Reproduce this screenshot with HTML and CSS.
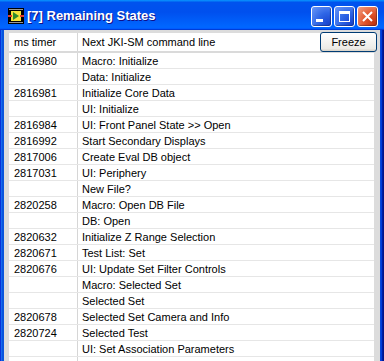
FILE: index.html
```html
<!DOCTYPE html>
<html lang="en">
<head>
  <meta charset="UTF-8">
  <title>[7] Remaining States</title>
  <link rel="stylesheet" href="styles.css">
</head>
<body>
  <div class="window">
    <div class="titlebar">
      <svg class="vi-icon" width="16" height="16" viewBox="0 0 16 16">
        <rect x="0" y="0" width="16" height="16" fill="#000"/>
        <rect x="1" y="1" width="14" height="1" fill="#9a9a9a"/>
        <rect x="1" y="14" width="14" height="1" fill="#9a9a9a"/>
        <rect x="3" y="3" width="10" height="10" fill="#f4e23c"/>
        <path d="M5 4 L11 8 L5 12 Z" fill="#2d8a2d"/>
        <rect x="0" y="7" width="4" height="2" fill="#e23a2a"/>
        <rect x="12" y="7" width="4" height="2" fill="#e23a2a"/>
      </svg>
      <span class="title">[7] Remaining States</span>
      <div class="controls">
        <div class="wbtn">
          <svg width="19" height="19" viewBox="0 0 19 19"><rect x="4" y="12" width="7" height="3" fill="#fff"/></svg>
        </div>
        <div class="wbtn">
          <svg width="19" height="19" viewBox="0 0 19 19"><rect x="4.5" y="4.5" width="10" height="10" fill="none" stroke="#fff" stroke-width="1"/><rect x="4" y="4" width="11" height="3" fill="#fff"/></svg>
        </div>
        <div class="wbtn close">
          <svg width="19" height="19" viewBox="0 0 19 19"><path d="M5 5 L14 14 M14 5 L5 14" stroke="#fff" stroke-width="2"/></svg>
        </div>
      </div>
    </div>

    <div class="frame">
      <div class="list">
        <div class="row head"><div>ms timer</div><div>Next JKI-SM command line</div></div>
        <div class="row"><div>2816980</div><div>Macro: Initialize</div></div>
        <div class="row"><div></div><div>Data: Initialize</div></div>
        <div class="row"><div>2816981</div><div>Initialize Core Data</div></div>
        <div class="row"><div></div><div>UI: Initialize</div></div>
        <div class="row"><div>2816984</div><div>UI: Front Panel State &gt;&gt; Open</div></div>
        <div class="row"><div>2816992</div><div>Start Secondary Displays</div></div>
        <div class="row"><div>2817006</div><div>Create Eval DB object</div></div>
        <div class="row"><div>2817031</div><div>UI: Periphery</div></div>
        <div class="row"><div></div><div>New File?</div></div>
        <div class="row"><div>2820258</div><div>Macro: Open DB File</div></div>
        <div class="row"><div></div><div>DB: Open</div></div>
        <div class="row"><div>2820632</div><div>Initialize Z Range Selection</div></div>
        <div class="row"><div>2820671</div><div>Test List: Set</div></div>
        <div class="row"><div>2820676</div><div>UI: Update Set Filter Controls</div></div>
        <div class="row"><div></div><div>Macro: Selected Set</div></div>
        <div class="row"><div></div><div>Selected Set</div></div>
        <div class="row"><div>2820678</div><div>Selected Set Camera and Info</div></div>
        <div class="row"><div>2820724</div><div>Selected Test</div></div>
        <div class="row"><div></div><div>UI: Set Association Parameters</div></div>
        <div class="row"><div></div><div></div></div>
      </div>
      <button class="freeze">Freeze</button>
    </div>
  </div>
</body>
</html>
```

FILE: styles.css
```css
body { margin: 0; padding: 0; font-family: "Liberation Sans", Arial, sans-serif; font-size: 11px; color: #000; }
.window { width: 384px; height: 361px; overflow: hidden; display: flex; flex-direction: column; }

.titlebar { height: 30px; flex: none; display: flex; align-items: center; padding: 0 6px 0 8px;
  background: linear-gradient(180deg, #0997ff, #0053ee 8%, #0050ee 40%, #0066ff 88%, #0066ff 93%, #005bff 95%, #003dd7 96%, #003dd7); }
.vi-icon { flex: none; margin-right: 2px; margin-top: 2px; }
.title { color: #fff; font-weight: bold; font-size: 13px; text-shadow: 1px 1px 0 #0f1089; padding-left: 1px; margin-top: 1px; }
.controls { margin-left: auto; display: flex; gap: 2px; margin-top: 2px; }
.wbtn { width: 19px; height: 19px; border: 1px solid #fff; border-radius: 3px;
  background: radial-gradient(circle at 85% 85%, #1a45cf 0%, #2e65e6 45%, #6a98f8 100%);
  box-shadow: inset -1px -1px 1px rgba(0,0,40,0.35); }
.wbtn svg { display: block; }
.wbtn.close { background: radial-gradient(circle at 85% 85%, #c2350f 0%, #e2572e 45%, #f3a184 100%); }

.frame { flex: 1; position: relative; background: #dcdcdc; padding: 3px 10px 0 9px;
  box-shadow: inset 1px 0 #0831d9, inset 2px 0 #166aee, inset 3px 0 #0855dd, inset 4px 0 #0855dd,
    inset -1px 0 #00138c, inset -2px 0 #001ea0, inset -3px 0 #003bda, inset -4px 0 #0847d8; }
.list { background: #fff; height: 100%; }
.row { display: grid; grid-template-columns: 69px 1fr; height: 15px; border-bottom: 1px solid #e6e6e6; line-height: 16px; }
.row > div { white-space: nowrap; overflow: hidden; }
.row > div:first-child { padding-left: 5px; border-right: 1px solid #d6d6d6; }
.row > div:last-child { padding-left: 4px; }
.row.head { height: 18px; line-height: 19px; border-bottom: 2px solid #dadada; }

.freeze { position: absolute; top: 2px; left: 320px; width: 57px; height: 20px; padding: 0;
  font-family: "Liberation Sans", Arial, sans-serif; font-size: 11px; color: #000;
  border: 1px solid #003c74; border-radius: 3px; background: linear-gradient(180deg, #fff, #ecebe6 86%, #d6d0c5); }
```
